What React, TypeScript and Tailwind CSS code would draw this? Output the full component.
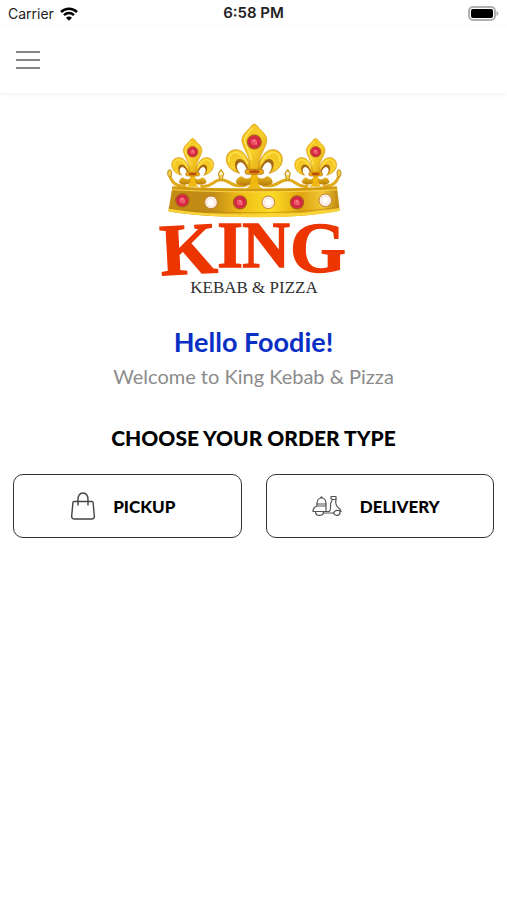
import React from 'react';

interface FleurProps {
  x: number;
  y: number;
  scale: number;
}

interface OrderButtonProps {
  label: string;
  icon: React.ReactNode;
}

function Curl() {
  return (
    <>
      <path
        d="M-8 136 C-18 104 -30 78 -54 77 C-76 76 -88 96 -83 114 C-79 132 -62 144 -44 148 C-53 139 -57 127 -50 118 C-45 110 -34 111 -29 120 L-13 142 Z"
        fill="url(#gold)"
        stroke="#c98a09"
        strokeWidth="2"
      />
      <path d="M-44 148 C-62 134 -63 108 -46 105 C-34 103 -25 116 -19 132 L-22 138 C-29 119 -39 110 -48 118 C-56 126 -52 138 -44 148 Z" fill="#a66a14" />
      <path d="M-76 112 C-78 92 -64 83 -50 86 C-36 91 -28 102 -21 118" fill="none" stroke="#ffe04c" strokeWidth="5" strokeLinecap="round" />
      <path
        d="M-5 150 C-11 170 -30 166 -38 157 C-48 160 -56 167 -54 178 C-42 188 -16 188 0 174 Z"
        fill="url(#goldDark)"
        stroke="#c98a09"
        strokeWidth="1"
      />
    </>
  );
}

function Fleur({ x, y, scale }: FleurProps) {
  return (
    <g transform={`translate(${x} ${y}) scale(${scale})`}>
      <Curl />
      <g transform="scale(-1 1)">
        <Curl />
      </g>
      <path
        d="M0 0 C9 2 11 11 19 18 C32 29 41 42 36 57 C31 76 17 92 14 116 L13 142 H-13 L-14 116 C-17 92 -31 76 -36 57 C-41 42 -32 29 -19 18 C-11 11 -9 2 0 0 Z"
        fill="url(#gold)"
        stroke="#d39408"
        strokeWidth="2"
      />
      <path d="M-5 12 C-12 23 -29 32 -29 50 C-27 66 -13 80 -9 106" fill="none" stroke="#ffe760" strokeWidth="4" strokeLinecap="round" />
      <path d="M-10 150 L10 150 C7 176 14 190 28 194 H-28 C-14 190 -7 176 -10 150 Z" fill="#efb911" />
      <rect x="-28" y="136" width="56" height="15" rx="7" fill="#e9a90c" stroke="#a96810" strokeWidth="2" />
      <ellipse cx="0" cy="143" rx="16" ry="5" fill="#bd4d11" />
      <Ruby x={0} y={54} r={22} />
    </g>
  );
}

function Ruby({ x, y, r }: { x: number; y: number; r: number }) {
  return (
    <g transform={`translate(${x} ${y}) scale(${r / 20})`}>
      <circle r="19" fill="#d93145" stroke="#a65b16" strokeWidth="3" />
      <path d="M-14 -8 L-3 -14 L11 -10 L15 3 L7 13 L-7 14 L-15 4 Z" fill="#d0243f" />
      <path d="M-8 -7 L2 -9 L9 -2 L5 8 L-5 9 L-10 1 Z" fill="#ec5368" />
      <path d="M-4 -5 L3 -6 L1 1 Z M3 5 L8 1 L5 9 Z" fill="#ff91a0" />
    </g>
  );
}

function Pearl({ x, y }: { x: number; y: number }) {
  return (
    <g transform={`translate(${x} ${y})`}>
      <circle r="19" fill="#fff1e9" stroke="#bd8137" strokeWidth="3" />
      <path d="M-11 -7 L0 -13 L11 -6 L12 7 L0 13 L-11 7 Z" fill="#fffdfa" stroke="#f4d8ca" strokeWidth="2" />
    </g>
  );
}

function Logo() {
  return (
    <svg viewBox="-3 0 630 580" className="w-[210px]" role="img" aria-label="King Kebab & Pizza">
      <defs>
        <linearGradient id="gold" x1="0" x2="1" y1="0" y2="1">
          <stop offset="0" stopColor="#f2bd1a" />
          <stop offset="0.5" stopColor="#f7cf2a" />
          <stop offset="1" stopColor="#dc9b0c" />
        </linearGradient>
        <linearGradient id="goldDark" x1="0" x2="0" y1="0" y2="1">
          <stop offset="0" stopColor="#f4c51c" />
          <stop offset="1" stopColor="#b87b0b" />
        </linearGradient>
        <linearGradient id="band" x1="0" x2="1" y1="0" y2="0">
          <stop offset="0" stopColor="#c58c12" />
          <stop offset="0.25" stopColor="#c08a16" />
          <stop offset="0.42" stopColor="#eebc17" />
          <stop offset="0.6" stopColor="#fddd24" />
          <stop offset="0.78" stopColor="#e0a511" />
          <stop offset="0.9" stopColor="#f2c735" />
          <stop offset="1" stopColor="#bd850f" />
        </linearGradient>
      </defs>

      {/* crown */}
      <g fill="none" stroke="#e0ab1c" strokeWidth="9" strokeLinecap="round">
        <path d="M58 193 C66 223 83 230 104 228" />
        <path d="M568 193 C560 223 543 230 522 228" />
        <path d="M155 229 C184 234 188 210 213 209 C239 208 242 234 286 226" />
        <path d="M471 229 C442 234 438 210 413 209 C387 208 384 234 340 226" />
      </g>
      <g fill="#f4ce46" stroke="#c08a1c" strokeWidth="3">
        <ellipse cx="59" cy="190" rx="6" ry="11" />
        <ellipse cx="567" cy="190" rx="6" ry="11" />
        <path d="M213 178 L221 190 L216 211 H210 L205 190 Z" />
        <path d="M413 178 L421 190 L416 211 H410 L405 190 Z" />
      </g>
      <circle cx="213" cy="191" r="5" fill="#fff3dc" />
      <circle cx="413" cy="191" r="5" fill="#fff3dc" />
      <Fleur x={128} y={85} scale={0.75} />
      <Fleur x={497} y={85} scale={0.75} />
      <Fleur x={313} y={42} scale={1} />
      <path d="M67 231 C205 240 430 240 561 231 L569 302 C455 328 175 328 55 304 Z" fill="url(#band)" />
      <path d="M67 233 C205 242 430 242 561 233" fill="none" stroke="#d39b10" strokeWidth="8" />
      <path d="M66 239 C205 248 430 248 562 239" fill="none" stroke="#f8d449" strokeWidth="3" />
      <path d="M56 300 C180 323 451 323 568 298" fill="none" stroke="#f9d43b" strokeWidth="8" />
      <path d="M56 291 C180 314 451 314 568 290" fill="none" stroke="#b8840f" strokeWidth="2" />
      <Ruby x={97} y={271} r={21} />
      <Pearl x={183} y={277} />
      <Ruby x={270} y={277} r={21} />
      <Pearl x={355} y={277} />
      <Ruby x={441} y={277} r={21} />
      <Pearl x={526} y={271} />

      {/* wordmark */}
      <g fill="#ec3500" stroke="#ec3500" strokeWidth="4" fontFamily='"Liberation Serif", serif' fontWeight="700">
        <text x="34" y="496" fontSize="220" transform="rotate(-3 34 496)">K</text>
        <text x="202" y="471" fontSize="198">I</text>
        <text x="277" y="471" fontSize="198">N</text>
        <text x="420" y="487" fontSize="216">G</text>
      </g>
      <text x="312" y="550" textAnchor="middle" fontSize="51" fill="#303030" fontFamily='"Liberation Serif", serif'>
        KEBAB &amp; PIZZA
      </text>
    </svg>
  );
}

function WifiIcon() {
  return (
    <svg viewBox="0 0 18 14" className="h-[14px] w-[18px]" aria-hidden="true">
      <g fill="none" stroke="#000" strokeWidth="2.5">
        <path d="M1 5 C5.5 0.7 12.5 0.7 17 5" />
        <path d="M4 8.2 C7 5.4 11 5.4 14 8.2" />
      </g>
      <path d="M6 10.7 C7.8 9.1 10.2 9.1 12 10.7 L9 13.7 Z" />
    </svg>
  );
}

function BatteryIcon() {
  return (
    <svg viewBox="0 0 31 15" className="h-[15px] w-[31px]" aria-hidden="true">
      <rect x="1" y="1" width="26" height="13" rx="4" fill="#fff" stroke="#b0b0b0" strokeWidth="2" />
      <rect x="3" y="3" width="22" height="9" rx="2" />
      <path d="M28.5 5 C31 6 31 9 28.5 10 Z" fill="#aaa" />
    </svg>
  );
}

function BagIcon() {
  return (
    <svg viewBox="0 0 24 28" className="h-7 w-6" fill="none" stroke="#444" strokeWidth="1.4" strokeLinecap="round" strokeLinejoin="round" aria-hidden="true">
      <path d="M3 9.5 H21 Q22 9.5 22.1 10.5 L23.3 24 Q23.5 27 20.5 27 H3.5 Q.5 27 .7 24 L1.9 10.5 Q2 9.5 3 9.5 Z" />
      <path d="M7 13 V8 C7 3.5 9 1 12 1 C15 1 17 3.5 17 8 V13" />
    </svg>
  );
}

function ScooterIcon() {
  return (
    <svg viewBox="0 0 30 22" className="h-[22px] w-[30px]" fill="none" stroke="#555" strokeWidth="1.2" strokeLinecap="round" strokeLinejoin="round" aria-hidden="true">
      <path d="M5 9 C5 5 7 3 9.5 3 C12 3 14 5 14 9 Z M8.5 3 Q9.5 .5 10.5 3" />
      <path d="M5 9 V11 H14 V9 M5 11 C2 12 1 14 1 16.5 H14 V11" />
      <path d="M3.5 16.5 C3.5 21.8 11.5 21.8 11.5 16.5 M14 16.5 H17 C20 15 17.5 10 19 7.5 L20.5 4.5 L19 3.5 V1.5 H24 V4.5 C23 9 24.5 12 28 14 L29 16.5 C26 14.5 23 15 21.5 18 H12" />
      <path d="M21.5 18 C23 21.8 28.5 21 28 16.5 M21 4.5 H24" />
    </svg>
  );
}

function OrderButton({ label, icon }: OrderButtonProps) {
  return (
    <button
      type="button"
      className="flex h-16 flex-1 items-center justify-center gap-[18px] rounded-[10px] border border-[#333] bg-white pr-2 text-[17px] font-black text-black"
    >
      {icon}
      <span>{label}</span>
    </button>
  );
}

export default function App() {
  return (
    <div className="min-h-screen bg-white font-['Lato',sans-serif]">
      <div className="grid h-[25px] grid-cols-3 items-center px-2 pt-[2px] font-['Inter',sans-serif] text-[14px] text-[#222]">
        <div className="flex items-center gap-[6px]">
          <span>Carrier</span>
          <WifiIcon />
        </div>
        <span className="text-center text-[15px] font-semibold">6:58 PM</span>
        <div className="flex justify-end">
          <BatteryIcon />
        </div>
      </div>

      <header className="flex h-[68px] items-center border-t border-[#fafafa] px-4 shadow-[0_2px_4px_rgba(0,0,0,0.05)]">
        <button type="button" aria-label="Open menu" className="flex w-6 flex-col gap-[6px]">
          <span className="h-[2px] w-full bg-[#858585]" />
          <span className="h-[2px] w-full bg-[#858585]" />
          <span className="h-[2px] w-full bg-[#858585]" />
        </button>
      </header>

      <main className="flex flex-col items-center px-[13px] pt-[17px]">
        <Logo />
        <h1 className="mt-[22px] text-[27px] leading-[34px] font-bold text-[#0a2fc4]">Hello Foodie!</h1>
        <p className="text-[20px] leading-[34px] text-[#8b8b8b]">Welcome to King Kebab &amp; Pizza</p>
        <h2 className="mt-[31px] text-[21px] leading-7 font-black text-black">CHOOSE YOUR ORDER TYPE</h2>
        <div className="mt-[22px] flex w-full gap-6">
          <OrderButton label="PICKUP" icon={<BagIcon />} />
          <OrderButton label="DELIVERY" icon={<ScooterIcon />} />
        </div>
      </main>
    </div>
  );
}
